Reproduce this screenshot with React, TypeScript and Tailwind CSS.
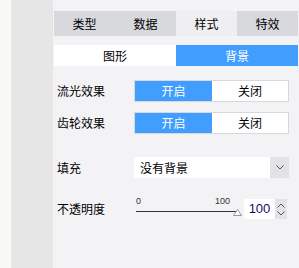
import { useState } from 'react';

const tabs = ['类型', '数据', '样式', '特效'];

function Toggle({ on }: { on: boolean }) {
  return (
    <div className="flex h-[22px] w-[155px] border border-[#d9d9dc] bg-white text-[12px]">
      <div className={`flex w-[77px] items-center justify-center ${on ? 'bg-[#419efe] text-white' : 'text-black'}`}>开启</div>
      <div className={`flex flex-1 items-center justify-center ${!on ? 'bg-[#419efe] text-white' : 'text-black'}`}>关闭</div>
    </div>
  );
}

export default function App() {
  const [tab] = useState(2);

  return (
    <div
      className="flex h-[268px] w-[299px] overflow-hidden text-[12px] text-black"
      style={{ fontFamily: '"Noto Sans CJK SC", "Liberation Sans", sans-serif' }}
    >
      <div className="w-[12px] border-r border-[#ece9d8] bg-[#f8f8f6]" />
      <div className="w-[41px] bg-[#e6e6e6]" />
      <div className="flex-1 bg-[#f3f3f5] pl-[1px] pt-[11px]">
        {/* tabs */}
        <div className="flex h-[25px] w-[244px]">
          {tabs.map((t, i) => (
            <div
              key={t}
              className={`flex w-[61px] items-center justify-center ${i === tab ? 'bg-[#efeff1]' : 'bg-[#d8d9dd]'}`}
            >
              {t}
            </div>
          ))}
        </div>

        {/* sub tabs */}
        <div className="mt-[9px] flex h-[21px] w-[244px]">
          <div className="flex w-[122px] items-center justify-center bg-white">图形</div>
          <div className="flex w-[122px] items-center justify-center bg-[#419efe] text-white">背景</div>
        </div>

        <div className="mt-[14px] flex items-center">
          <div className="w-[80px] pl-[3px]">流光效果</div>
          <Toggle on />
        </div>

        <div className="mt-[10px] flex items-center">
          <div className="w-[80px] pl-[3px]">齿轮效果</div>
          <Toggle on />
        </div>

        <div className="mt-[23px] flex items-center">
          <div className="w-[80px] pl-[3px]">填充</div>
          <div className="flex h-[21px] w-[155px] bg-white">
            <div className="flex flex-1 items-center pl-[6px]">没有背景</div>
            <div className="flex w-[19px] items-center justify-center bg-[#e3e3e6]">
              <svg width="8" height="5" viewBox="0 0 8 5" fill="none" stroke="#555" strokeWidth="1">
                <path d="M0.5 0.5 L4 4 L7.5 0.5" />
              </svg>
            </div>
          </div>
        </div>

        <div className="mt-[21px] flex items-center">
          <div className="w-[80px] pl-[3px]">不透明度</div>
          <div className="relative h-[20px] w-[110px]">
            <span
              className="absolute left-[2px] top-[-4px] text-[9px] text-[#333]"
              style={{ fontFamily: '"Liberation Sans", sans-serif' }}
            >
              0
            </span>
            <span
              className="absolute left-[81px] top-[-4px] text-[9px] text-[#333]"
              style={{ fontFamily: '"Liberation Sans", sans-serif' }}
            >
              100
            </span>
            <div className="absolute left-[2px] top-[12px] h-[1px] w-[100px] bg-[#333]" />
            <svg className="absolute left-[99px] top-[10px]" width="9" height="7" viewBox="0 0 9 7" fill="white" stroke="#999">
              <path d="M4.5 0.5 L8.5 6.5 L0.5 6.5 Z" />
            </svg>
          </div>
          <div className="flex h-[20px] w-[43px]">
            <div
              className="flex w-[31px] items-center justify-center bg-white text-[13px] text-[#10106a]"
              style={{ fontFamily: '"Liberation Sans", sans-serif' }}
            >
              100
            </div>
            <div className="flex flex-1 flex-col items-center justify-center gap-[3px] bg-[#e3e3e6]">
              <svg width="8" height="5" viewBox="0 0 8 5" fill="none" stroke="#555">
                <path d="M0.5 4.5 L4 1 L7.5 4.5" />
              </svg>
              <svg width="8" height="5" viewBox="0 0 8 5" fill="none" stroke="#555">
                <path d="M0.5 0.5 L4 4 L7.5 0.5" />
              </svg>
            </div>
          </div>
        </div>
      </div>
    </div>
  );
}
